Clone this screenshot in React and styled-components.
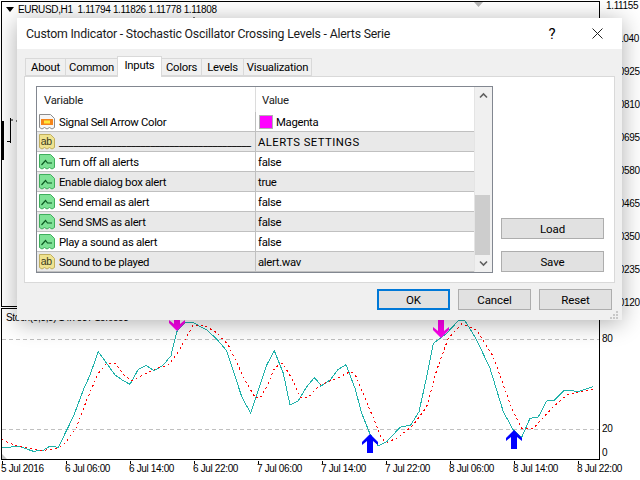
import styled, { createGlobalStyle } from 'styled-components';

const GlobalStyle = createGlobalStyle`
    html, body {
        margin: 0;
        padding: 0;
        background: #fff;
    }
`;

const chartFont = `font-family: "Liberation Sans", Arial, sans-serif; font-size: 10px; letter-spacing: -0.35px; color: #000;`;
const dialogFont = `font-family: Roboto, "Liberation Sans", sans-serif;`;

const Page = styled.div`
    position: relative;
    width: 640px;
    height: 480px;
    padding: 1px 0 0 1px;
    box-sizing: border-box;
    overflow: hidden;
    background: #fff;
`;

const ChartRow = styled.div`
    display: flex;
    height: ${(p) => p.$height}px;
    margin-bottom: 1px;
`;

const Plot = styled.div`
    position: relative;
    width: 599px;
    flex: none;
    box-sizing: border-box;
    border: 1px solid #000;
    padding: 1px 0 0 4px;
    ${chartFont}
`;

const Legend = styled.div`
    display: flex;
    align-items: center;
    gap: 4px;
    height: 13px;
    white-space: pre;
`;

const LegendArrow = styled.span`
    width: 0;
    height: 0;
    border-left: 4px solid transparent;
    border-right: 4px solid transparent;
    border-top: 5px solid #000;
`;

const SubLegend = styled.div`
    margin-top: 2px;
    white-space: pre;
`;

const ChartSvg = styled.svg`
    position: absolute;
    left: -1px;
    top: -1px;
`;

const PriceAxis = styled.div`
    ${chartFont}
    margin-top: -12px;
    display: flex;
    flex-direction: column;
`;

const PriceLabel = styled.div`
    height: 33px;
    line-height: 33px;
    padding-left: 6px;
    white-space: nowrap;
`;

const LevelAxis = styled.div`
    ${chartFont}
    position: relative;
    flex: 1;
`;

const LevelLabel = styled.span`
    position: absolute;
    left: 2px;
    top: ${(p) => p.$top}px;
`;

const DateAxis = styled.div`
    ${chartFont}
    display: flex;
    width: 640px;
`;

const DateCell = styled.div`
    position: relative;
    width: 64px;
    flex: none;
    padding-top: 2px;
    white-space: nowrap;

    &::before {
        content: '';
        position: absolute;
        left: 1px;
        top: 0;
        width: 1px;
        height: 3px;
        background: #000;
    }
`;

const Dialog = styled.div`
    position: absolute;
    left: 17px;
    top: 18px;
    width: 605px;
    height: 302px;
    display: flex;
    flex-direction: column;
    background: #f0f0f0;
    box-shadow: 0 3px 22px rgba(0, 0, 0, 0.32);
    ${dialogFont}
    color: #000;
`;

const TitleBar = styled.div`
    height: 31px;
    flex: none;
    display: flex;
    align-items: center;
    background: #fff;
    padding: 0 19px 0 9px;
`;

const Title = styled.div`
    flex: 1;
    font-size: 12.3px;
    letter-spacing: -0.2px;
    color: #1a1a1a;
    white-space: nowrap;
`;

const HelpMark = styled.span`
    font-size: 15px;
    width: 12px;
    margin-right: 34px;
    text-align: center;
`;

const TabStrip = styled.div`
    display: flex;
    align-items: flex-end;
    height: 20px;
    margin: 7px 0 0 9px;
    position: relative;
    z-index: 1;
`;

const Tab = styled.div`
    box-sizing: border-box;
    width: ${(p) => p.$width}px;
    height: ${(p) => (p.$active ? 21 : 18)}px;
    margin-bottom: ${(p) => (p.$active ? -1 : 0)}px;
    padding-bottom: ${(p) => (p.$active ? 3 : 0)}px;
    display: flex;
    align-items: center;
    justify-content: center;
    font-size: 11.3px;
    letter-spacing: -0.25px;
    background: ${(p) => (p.$active ? '#fff' : '#f0f0f0')};
    border: 1px solid #d9d9d9;
    border-bottom: ${(p) => (p.$active ? 'none' : '1px solid #d9d9d9')};
    margin-left: -1px;
`;

const TabPanel = styled.div`
    box-sizing: border-box;
    height: 207px;
    margin: 0 7px 0 7px;
    display: flex;
    gap: 8px;
    padding: 9px 10px 9px 11px;
    background: #fff;
    border: 1px solid #d9d9d9;
`;

const InputsGrid = styled.div`
    box-sizing: border-box;
    width: 457px;
    height: 187px;
    display: flex;
    border: 1px solid #828790;
`;

const Rows = styled.div`
    flex: 1;
    min-width: 0;
    border-right: 1px solid #e4e4e4;
`;

const HeaderRow = styled.div`
    display: grid;
    grid-template-columns: 218px 1fr;
    height: 25px;
    align-items: center;
    font-size: 11.3px;
    letter-spacing: -0.25px;
    color: #222;
`;

const HeaderCell = styled.div`
    box-sizing: border-box;
    height: 100%;
    display: flex;
    align-items: center;
    padding: 2px 0 0 ${(p) => p.$pad}px;
    border-left: ${(p) => (p.$divider ? '1px solid #dcdcdc' : 'none')};
`;

const Row = styled.div`
    display: grid;
    grid-template-columns: 218px 1fr;
    box-sizing: border-box;
    height: 20px;
    background: ${(p) => (p.$shaded ? '#e9e9e9' : '#fff')};
    border-bottom: 1px solid #c0c0c0;
    font-size: 11.3px;
    letter-spacing: -0.3px;
`;

const NameCell = styled.div`
    display: flex;
    align-items: center;
    gap: 4px;
    padding: 2px 0 0 2px;
    overflow: hidden;
    white-space: nowrap;
`;

const ValueCell = styled.div`
    display: flex;
    align-items: center;
    gap: 3px;
    padding: 2px 0 0 2px;
    border-left: 1px solid #c0c0c0;
    white-space: nowrap;
    letter-spacing: ${(p) => (p.$heading ? '0.45px' : 'inherit')};
`;

const Swatch = styled.span`
    width: 12px;
    height: 12px;
    margin: -2px 0 0 1px;
    background: #ff00ff;
    border: 1px solid #b0b0b0;
`;

const IconSvg = styled.svg`
    flex: none;
    margin-top: -2px;
`;

const Scrollbar = styled.div`
    width: 17px;
    flex: none;
    display: flex;
    flex-direction: column;
    align-items: center;
    background: #f0f0f0;
`;

const ScrollArrow = styled.div`
    height: 17px;
    flex: none;
    display: flex;
    align-items: center;
    justify-content: center;
`;

const ScrollTrack = styled.div`
    flex: 1;
    width: 100%;
`;

const ScrollThumb = styled.div`
    width: 15px;
    height: 60px;
    margin-top: 91px;
    background: #cdcdcd;
`;

const SideButtons = styled.div`
    display: flex;
    flex-direction: column;
    justify-content: flex-end;
    gap: 12px;
    padding-bottom: 1px;
`;

const Button = styled.div`
    box-sizing: border-box;
    width: ${(p) => p.$width}px;
    height: 21px;
    display: flex;
    align-items: center;
    justify-content: center;
    font-size: 11.5px;
    letter-spacing: -0.1px;
    background: #e1e1e1;
    border: ${(p) => (p.$primary ? '2px solid #0078d7' : '1px solid #adadad')};
`;

const Footer = styled.div`
    display: flex;
    justify-content: flex-end;
    gap: 8px;
    padding: 6px 10px 0 0;
`;

const Grip = styled.svg`
    position: absolute;
    right: 4px;
    bottom: 1px;
`;

const toPoints = (zoomed, xOffset) =>
    zoomed.map(([x, y]) => `${(xOffset + x / 3).toFixed(1)},${(310 + y / 3).toFixed(1)}`).join(' ');

const mainLine = [
    toPoints([[5, 412], [60, 410], [100, 424], [130, 421], [150, 408], [175, 412], [220, 320], [250, 240], [270, 195], [295, 125], [345, 195], [370, 212], [390, 223], [415, 178], [438, 166], [462, 182], [490, 165], [513, 137], [530, 65], [555, 38], [580, 38], [620, 60], [650, 87], [680, 122], [725, 260], [752, 310], [800, 165], [823, 122], [850, 190], [870, 285], [895, 272], [920, 230], [943, 203], [960, 222]], 0),
    toPoints([[0, 230], [30, 210], [55, 178], [78, 164], [105, 235], [125, 310], [150, 372], [175, 408], [200, 395], [240, 352], [272, 345], [297, 305], [320, 200], [340, 100], [380, 70], [415, 32], [435, 32], [470, 90], [510, 175], [550, 305], [580, 360], [605, 382], [630, 325], [655, 321], [680, 273], [703, 271], [730, 243], [750, 241], [775, 245], [820, 230]], 320),
].join(' ');

const signalLine = [
    toPoints([[5, 388], [30, 400], [60, 410], [100, 418], [125, 422], [175, 414], [195, 400], [230, 350], [260, 270], [295, 190], [320, 160], [345, 160], [375, 198], [395, 212], [430, 195], [470, 175], [505, 165], [535, 125], [580, 45], [615, 47], [650, 68], [685, 105], [735, 210], [765, 262], [780, 265], [800, 230], [825, 172], [848, 160], [875, 205], [900, 262], [925, 262], [945, 240], [960, 225]], 0),
    toPoints([[0, 225], [55, 203], [90, 185], [105, 192], [150, 300], [185, 385], [200, 398], [235, 382], [280, 345], [320, 290], [350, 180], [385, 85], [425, 42], [470, 60], [520, 140], [575, 295], [605, 355], [640, 355], [700, 290], [740, 255], [780, 247], [820, 237]], 320),
].join(' ');

const SellArrow = ({ x, tip }) => (
    <polygon
        fill="#ff00ee"
        points={`${x},${tip} ${x - 8},${tip - 8} ${x - 8},${tip - 11} ${x - 3},${tip - 7} ${x - 3},${tip - 19} ${x + 3},${tip - 19} ${x + 3},${tip - 7} ${x + 8},${tip - 11} ${x + 8},${tip - 8}`}
    />
);

const BuyArrow = ({ x, tip }) => (
    <polygon
        fill="#0000ff"
        points={`${x},${tip} ${x + 8},${tip + 8} ${x + 8},${tip + 11} ${x + 3},${tip + 7} ${x + 3},${tip + 19} ${x - 3},${tip + 19} ${x - 3},${tip + 7} ${x - 8},${tip + 11} ${x - 8},${tip + 8}`}
    />
);

const TORN_PAGE = 'M0.5 1.5H11.5L15.5 5.5V14.5L13 16 10.5 14.5 8 16 5.5 14.5 3 16 0.5 14.5Z';

const RowIcon = ({ kind }) => {
    if (kind === 'text') {
        return (
            <IconSvg width="16" height="17" viewBox="0 0 16 17">
                <path d={TORN_PAGE} fill="#efe28f" stroke="#bfae5e" />
                <text x="1.8" y="12" fontSize="10.5" fontFamily="Liberation Sans, sans-serif" fill="#3a3a20">ab</text>
            </IconSvg>
        );
    }
    if (kind === 'color') {
        return (
            <IconSvg width="16" height="17" viewBox="0 0 16 17">
                <path d={TORN_PAGE} fill="#f6f6f6" stroke="#8c8c8c" />
                <rect x="2" y="6" width="12" height="6" fill="#f5851a" />
                <rect x="5" y="7.5" width="6" height="3" fill="#ffe93c" />
            </IconSvg>
        );
    }
    return (
        <IconSvg width="16" height="17" viewBox="0 0 16 17">
            <path d={TORN_PAGE} fill="#7fe296" stroke="#3fae5c" />
            <path d="M2.5 12L6.5 7.5 8.5 10H13" fill="none" stroke="#0a5a20" strokeWidth="1.2" />
        </IconSvg>
    );
};

const Chevron = ({ up }) => (
    <svg width="9" height="7" viewBox="0 0 9 7">
        <path d={up ? 'M1 5.5L4.5 2 8 5.5' : 'M1 1.5L4.5 5 8 1.5'} fill="none" stroke="#606060" strokeWidth="1.6" />
    </svg>
);

const prices = ['1.11155', '1.11040', '1.10925', '1.10810', '1.10695', '1.10580', '1.10465', '1.10350', '1.10235', '1.10120'];
const dates = ['5 Jul 2016', '6 Jul 06:00', '6 Jul 14:00', '6 Jul 22:00', '7 Jul 06:00', '7 Jul 14:00', '7 Jul 22:00', '8 Jul 06:00', '8 Jul 14:00', '8 Jul 22:00'];
const tabs = [
    ['About', 41],
    ['Common', 53],
    ['Inputs', 45],
    ['Colors', 41],
    ['Levels', 43],
    ['Visualization', 69],
];
const inputs = [
    { icon: 'color', name: 'Signal Sell Arrow Color', value: 'Magenta', swatch: true },
    { icon: 'text', name: '________________________________________', value: 'ALERTS SETTINGS', shaded: true, heading: true },
    { icon: 'bool', name: 'Turn off all alerts', value: 'false' },
    { icon: 'bool', name: 'Enable dialog box alert', value: 'true', shaded: true },
    { icon: 'bool', name: 'Send email as alert', value: 'false' },
    { icon: 'bool', name: 'Send SMS as alert', value: 'false', shaded: true },
    { icon: 'bool', name: 'Play a sound as alert', value: 'false' },
    { icon: 'text', name: 'Sound to be played', value: 'alert.wav', shaded: true },
];

const App = () => (
    <Page>
        <GlobalStyle />
        <ChartRow $height={306}>
            <Plot>
                <ChartSvg width="599" height="306" viewBox="1 1 599 306">
                    <polygon points="474,2 483,2 478.5,7" fill="#b5b5b5" />
                    <rect x="2" y="121" width="2" height="39" fill="#000" />
                    <path d="M10.5 118V143M10.5 120H13M7 141.5H10.5M16 121H17M194 17V18" stroke="#000" fill="none" />
                </ChartSvg>
                <Legend>
                    <LegendArrow />
                    {'EURUSD,H1  1.11794 1.11826 1.11778 1.11808'}
                </Legend>
            </Plot>
            <PriceAxis>
                {prices.map((price) => (
                    <PriceLabel key={price}>{price}</PriceLabel>
                ))}
            </PriceAxis>
        </ChartRow>
        <ChartRow $height={152}>
            <Plot>
                <ChartSvg width="599" height="152" viewBox="1 308 599 152">
                    <path d="M2 339.5H599M2 429.5H599" stroke="#c0c0c0" strokeDasharray="4 3" fill="none" />
                    <polygon points="2,454 7,459 2,459" fill="#c4c4c4" />
                    <polyline points={mainLine} fill="none" stroke="#20b2aa" shapeRendering="crispEdges" />
                    <polyline points={signalLine} fill="none" stroke="#ff0000" strokeDasharray="2 3" shapeRendering="crispEdges" />
                    <SellArrow x={177} tip={331} />
                    <SellArrow x={441} tip={338} />
                    <BuyArrow x={370} tip={434} />
                    <BuyArrow x={514} tip={430} />
                </ChartSvg>
                <SubLegend>Stoch(5,3,3) 14.7837 15.6553</SubLegend>
            </Plot>
            <LevelAxis>
                <LevelLabel $top={25}>80</LevelLabel>
                <LevelLabel $top={115}>20</LevelLabel>
                <LevelLabel $top={139}>0</LevelLabel>
            </LevelAxis>
        </ChartRow>
        <DateAxis>
            {dates.map((date) => (
                <DateCell key={date}>{date}</DateCell>
            ))}
        </DateAxis>

        <Dialog>
            <TitleBar>
                <Title>Custom Indicator - Stochastic Oscillator Crossing Levels - Alerts Serie</Title>
                <HelpMark>?</HelpMark>
                <svg width="11" height="11" viewBox="0 0 11 11">
                    <path d="M0.5 0.5L10.5 10.5M10.5 0.5L0.5 10.5" stroke="#222" fill="none" />
                </svg>
            </TitleBar>
            <TabStrip>
                {tabs.map(([label, width]) => (
                    <Tab key={label} $width={width} $active={label === 'Inputs'}>
                        {label}
                    </Tab>
                ))}
            </TabStrip>
            <TabPanel>
                <InputsGrid>
                    <Rows>
                        <HeaderRow>
                            <HeaderCell $pad={7}>Variable</HeaderCell>
                            <HeaderCell $pad={6} $divider>Value</HeaderCell>
                        </HeaderRow>
                        {inputs.map((input) => (
                            <Row key={input.name} $shaded={input.shaded}>
                                <NameCell>
                                    <RowIcon kind={input.icon} />
                                    {input.name}
                                </NameCell>
                                <ValueCell $heading={input.heading}>
                                    {input.swatch && <Swatch />}
                                    {input.value}
                                </ValueCell>
                            </Row>
                        ))}
                    </Rows>
                    <Scrollbar>
                        <ScrollArrow><Chevron up /></ScrollArrow>
                        <ScrollTrack>
                            <ScrollThumb />
                        </ScrollTrack>
                        <ScrollArrow><Chevron /></ScrollArrow>
                    </Scrollbar>
                </InputsGrid>
                <SideButtons>
                    <Button $width={103}>Load</Button>
                    <Button $width={103}>Save</Button>
                </SideButtons>
            </TabPanel>
            <Footer>
                <Button $width={73} $primary>OK</Button>
                <Button $width={73}>Cancel</Button>
                <Button $width={73}>Reset</Button>
            </Footer>
            <Grip width="8" height="8" viewBox="0 0 8 8">
                <path d="M6 0h2v2H6zM3 3h2v2H3zM6 3h2v2H6zM0 6h2v2H0zM3 6h2v2H3zM6 6h2v2H6z" fill="#c8c8c8" />
            </Grip>
        </Dialog>
    </Page>
);

export default App;
